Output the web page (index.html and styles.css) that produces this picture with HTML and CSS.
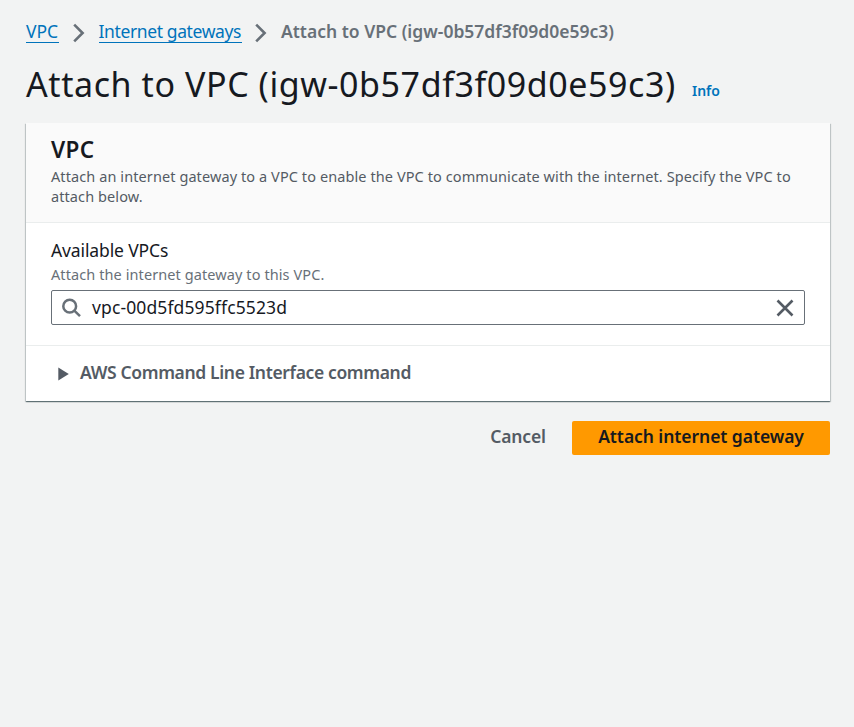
FILE: index.html
```html
<!DOCTYPE html>
<html lang="en">
<head>
<meta charset="utf-8">
<title>Attach to VPC</title>
<link rel="stylesheet" href="styles.css">
</head>
<body>
<main class="page">
  <nav class="breadcrumbs">
    <a class="crumb crumb-vpc" href="#">VPC</a>
    <svg class="chevron" width="12" height="20" viewBox="0 0 12 20"><path d="M1.2 1.7 9.6 10 1.2 18.3"/></svg>
    <a class="crumb crumb-gateways" href="#">Internet gateways</a>
    <svg class="chevron" width="12" height="20" viewBox="0 0 12 20"><path d="M1.2 1.7 9.6 10 1.2 18.3"/></svg>
    <span class="current">Attach to VPC (igw-0b57df3f09d0e59c3)</span>
  </nav>
  <header class="title-row">
    <h1 class="title">Attach to VPC (igw-0b57df3f09d0e59c3)</h1>
    <a class="info" href="#">Info</a>
  </header>
  <section class="card">
    <div class="card-header">
      <h2 class="card-title">VPC</h2>
      <p class="description">Attach an internet gateway to a VPC to enable the VPC to communicate with the internet. Specify the VPC to<br>attach below.</p>
    </div>
    <div class="field">
      <div class="label">Available VPCs</div>
      <div class="hint">Attach the internet gateway to this VPC.</div>
      <div class="input">
        <svg class="search" width="20" height="20" viewBox="0 0 20 20"><circle cx="7.7" cy="8.2" r="6.4"/><path d="m12.3 12.7 5.7 5.4"/></svg>
        <span class="value">vpc-00d5fd595ffc5523d</span>
        <svg class="clear" width="18" height="18" viewBox="0 0 18 18"><path d="m1.5 1.5 15 15m0-15-15 15"/></svg>
      </div>
    </div>
    <div class="expander">
      <svg class="caret" width="11" height="14" viewBox="0 0 11 14"><path d="M.3.6 10.8 7 .3 13.4Z"/></svg>
      <span class="expander-label">AWS Command Line Interface command</span>
    </div>
  </section>
  <div class="actions">
    <button class="cancel">Cancel</button>
    <button class="submit">Attach internet gateway</button>
  </div>
</main>
</body>
</html>
```

FILE: styles.css
```css
* { box-sizing: border-box; }
body {
  margin: 0;
  background: #f2f3f3;
  color: #16191f;
  font: 17.5px/24px "Noto Sans", sans-serif;
}
h1, h2, p { margin: 0; }
a { color: #0073bb; text-decoration: none; }
.page { width: 854px; min-height: 727px; padding: 19px 24px 0 26px; }
.breadcrumbs { display: flex; height: 26px; white-space: nowrap; }
.crumb { height: 24px; border-bottom: 1px solid #0073bb; }
.crumb-vpc { width: 33px; }
.crumb-gateways { width: 143px; letter-spacing: -.38px; }
.chevron { flex: none; margin: 4px 14px 0 13.5px; fill: none; stroke: #687078; stroke-width: 2.6; }
.current { color: #687078; font-weight: 600; }
.title-row { display: flex; align-items: baseline; height: 56px; margin-top: 18px; white-space: nowrap; }
.title { width: 666px; padding-top: 1px; font-size: 34px; line-height: 40px; font-weight: 400; letter-spacing: .58px; }
.info { position: relative; top: -1px; font-size: 14px; font-weight: 600; }
.card {
  height: 278px;
  margin-top: 4px;
  background: #fff;
  box-shadow: 0 1px 1px 0 rgba(0, 28, 36, .45), 1px 1px 1px 0 rgba(0, 28, 36, .15), -1px 1px 1px 0 rgba(0, 28, 36, .15);
}
.card-header { height: 100px; padding: 13px 25px 0; background: #fafafa; border-bottom: 1px solid #eaeded; }
.card-title { font-size: 22.5px; line-height: 28px; font-weight: 600; letter-spacing: .3px; }
.description { color: #545b64; font-size: 14.5px; line-height: 20px; letter-spacing: .09px; white-space: nowrap; margin-top: 2px; }
.field { height: 122px; padding: 15px 25px 0; }
.label { line-height: 24px; letter-spacing: -.12px; }
.hint { margin-top: 2px; color: #687078; font-size: 14.5px; line-height: 20px; letter-spacing: .09px; }
.input { display: flex; align-items: center; height: 35px; margin-top: 6px; padding: 0 10px; border: 1px solid #687078; border-radius: 2px; }
.search { fill: none; stroke: #687078; stroke-width: 2.5; }
.value { margin: 0 0 1px 10px; letter-spacing: .12px; }
.clear { margin-left: auto; fill: none; stroke: #545b64; stroke-width: 2.6; }
.expander { display: flex; align-items: center; height: 56px; padding-left: 32px; border-top: 1px solid #eaeded; color: #545b64; font-weight: 600; }
.expander-label { margin-bottom: 3px; letter-spacing: -.36px; }
.caret { margin-right: 11px; fill: #545b64; }
.actions { display: flex; justify-content: flex-end; margin-top: 20px; }
button { height: 34px; padding: 0 0 4px; border: 0; border-radius: 2px; background: none; font: 600 17.5px/24px "Noto Sans", sans-serif; white-space: nowrap; }
.cancel { width: 56px; margin-right: 26px; color: #545b64; letter-spacing: -.15px; }
.submit { width: 258px; background: #f90; color: #16191f; letter-spacing: -.07px; }
```
